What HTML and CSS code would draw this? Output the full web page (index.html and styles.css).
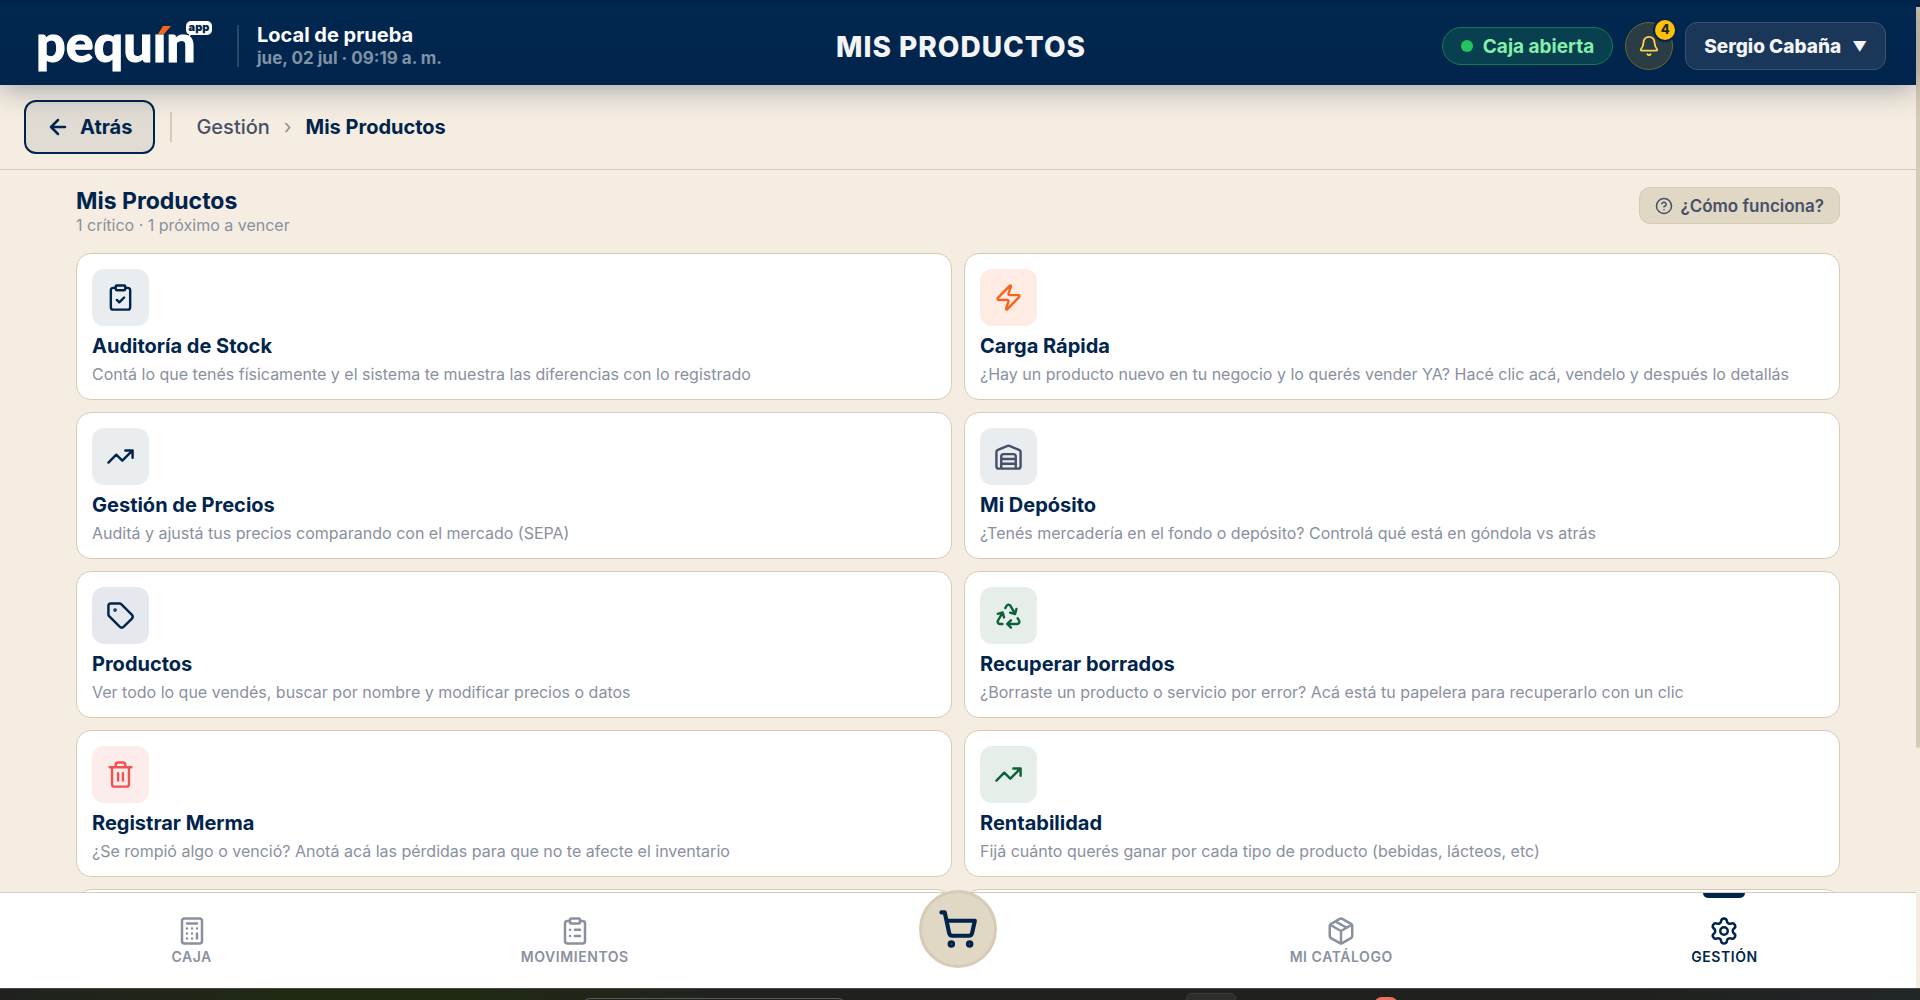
FILE: index.html
```html
<!DOCTYPE html>
<html lang="es">
<head>
<meta charset="utf-8">
<title>Mis Productos · pequín app</title>
<link rel="stylesheet" href="styles.css">
</head>
<body>
<svg class="sprite" aria-hidden="true">
  <symbol id="trend" viewBox="0 0 24 24"><path d="M22 7 13.5 15.5 8.500 10.500 2 17M16 7h6v6"/></symbol>
</svg>
<div class="app">
  <div class="screen">
    <header class="topbar">
      <div class="brand-side">
        <a class="logo" href="#" aria-label="pequín app">
          <span class="logo-word">pequın</span>
          <svg class="logo-accent" viewBox="0 0 13 8" aria-hidden="true"><path d="M0 8 5 0h8L6 8z"/></svg>
          <span class="logo-app">app</span>
        </a>
        <span class="top-divider"></span>
        <div class="store">
          <strong>Local de prueba</strong>
          <span>jue, 02 jul · 09:19 a. m.</span>
        </div>
      </div>
      <h1 class="top-title">MIS PRODUCTOS</h1>
      <div class="top-actions">
        <button class="cash" type="button"><span class="dot"></span>Caja abierta</button>
        <button class="bell" type="button" aria-label="Notificaciones">
          <svg viewBox="0 0 24 24"><path d="M10.268 21a2 2 0 0 0 3.464 0M3.262 15.326A1 1 0 0 0 4 17h16a1 1 0 0 0 .74-1.673C19.410 13.956 18 12.499 18 8A6 6 0 0 0 6 8c0 4.499-1.411 5.956-2.738 7.326"/></svg>
          <span class="count">4</span>
        </button>
        <button class="user" type="button">Sergio Cabaña<span class="caret">▼</span></button>
      </div>
    </header>

    <nav class="crumbs" aria-label="Ruta">
      <button class="back" type="button"><svg viewBox="0 0 24 24"><path d="m12 19-7-7 7-7M19 12H5"/></svg>Atrás</button>
      <span class="crumb-divider"></span>
      <div class="trail">
        <a href="#">Gestión</a>
        <span class="sep">›</span>
        <strong>Mis Productos</strong>
      </div>
    </nav>

    <main class="content">
      <div class="page-head">
        <div>
          <h2>Mis Productos</h2>
          <p>1 crítico · 1 próximo a vencer</p>
        </div>
        <button class="help" type="button"><svg viewBox="0 0 24 24"><circle cx="12" cy="12" r="10"/><path d="M9.090 9a3 3 0 0 1 5.830 1c0 2-3 3-3 3M12 17h.01"/></svg>¿Cómo funciona?</button>
      </div>

      <div class="grid">
        <a class="card" href="#">
          <span class="tile navy"><svg viewBox="0 0 24 24"><rect x="8" y="2" width="8" height="4" rx="1"/><path d="M16 4h2a2 2 0 0 1 2 2v14a2 2 0 0 1-2 2H6a2 2 0 0 1-2-2V6a2 2 0 0 1 2-2h2M9 14l2 2 4-4"/></svg></span>
          <h3>Auditoría de Stock</h3>
          <p>Contá lo que tenés físicamente y el sistema te muestra las diferencias con lo registrado</p>
        </a>
        <a class="card" href="#">
          <span class="tile orange"><svg viewBox="0 0 24 24"><path d="M4 14a1 1 0 0 1-.78-1.630l9.900-10.200a.5.5 0 0 1 .86.460l-1.920 6.020A1 1 0 0 0 13 10h7a1 1 0 0 1 .78 1.630l-9.900 10.200a.5.5 0 0 1-.86-.460l1.920-6.020A1 1 0 0 0 11 14z"/></svg></span>
          <h3>Carga Rápida</h3>
          <p>¿Hay un producto nuevo en tu negocio y lo querés vender YA? Hacé clic acá, vendelo y después lo detallás</p>
        </a>
        <a class="card" href="#">
          <span class="tile navy"><svg><use href="#trend"/></svg></span>
          <h3>Gestión de Precios</h3>
          <p>Auditá y ajustá tus precios comparando con el mercado (SEPA)</p>
        </a>
        <a class="card" href="#">
          <span class="tile slate"><svg viewBox="0 0 24 24"><path d="M22 8.350V20a2 2 0 0 1-2 2H4a2 2 0 0 1-2-2V8.350A2 2 0 0 1 3.260 6.500l8-3.200a2 2 0 0 1 1.480 0l8 3.200A2 2 0 0 1 22 8.350ZM6 18h12M6 14h12M6 22V12a2 2 0 0 1 2-2h8a2 2 0 0 1 2 2v10"/></svg></span>
          <h3>Mi Depósito</h3>
          <p>¿Tenés mercadería en el fondo o depósito? Controlá qué está en góndola vs atrás</p>
        </a>
        <a class="card" href="#">
          <span class="tile navy-deep"><svg viewBox="0 0 24 24"><path d="M12.586 2.586A2 2 0 0 0 11.172 2H4a2 2 0 0 0-2 2v7.172a2 2 0 0 0 .586 1.414l8.704 8.704a2.426 2.426 0 0 0 3.420 0l6.580-6.580a2.426 2.426 0 0 0 0-3.420z"/><circle cx="7.500" cy="7.500" r=".5" fill="currentColor"/></svg></span>
          <h3>Productos</h3>
          <p>Ver todo lo que vendés, buscar por nombre y modificar precios o datos</p>
        </a>
        <a class="card" href="#">
          <span class="tile green"><svg viewBox="0 0 24 24"><path d="M7 19H4.815a1.830 1.830 0 0 1-1.570-.881 1.785 1.785 0 0 1-.004-1.784L7.196 9.500M11 19h8.203a1.830 1.830 0 0 0 1.556-.890 1.784 1.784 0 0 0 0-1.775l-1.226-2.120M14 16l-3 3 3 3M8.293 13.596 7.196 9.500 3.100 10.598M9.344 5.811l1.093-1.892A1.830 1.830 0 0 1 11.985 3a1.784 1.784 0 0 1 1.546.888l3.943 6.843M13.378 9.633l4.096 1.098 1.097-4.096"/></svg></span>
          <h3>Recuperar borrados</h3>
          <p>¿Borraste un producto o servicio por error? Acá está tu papelera para recuperarlo con un clic</p>
        </a>
        <a class="card" href="#">
          <span class="tile red"><svg viewBox="0 0 24 24"><path d="M3 6h18M19 6v14a2 2 0 0 1-2 2H7a2 2 0 0 1-2-2V6M8 6V4a2 2 0 0 1 2-2h4a2 2 0 0 1 2 2v2M10 11v6M14 11v6"/></svg></span>
          <h3>Registrar Merma</h3>
          <p>¿Se rompió algo o venció? Anotá acá las pérdidas para que no te afecte el inventario</p>
        </a>
        <a class="card" href="#">
          <span class="tile green"><svg><use href="#trend"/></svg></span>
          <h3>Rentabilidad</h3>
          <p>Fijá cuánto querés ganar por cada tipo de producto (bebidas, lácteos, etc)</p>
        </a>
        <a class="card" href="#" aria-label="Más opciones"></a>
        <a class="card" href="#" aria-label="Más opciones"></a>
      </div>
    </main>

    <nav class="tabs" aria-label="Principal">
      <a href="#"><svg viewBox="0 0 24 24"><rect x="4" y="2" width="16" height="20" rx="2"/><path d="M8 6h8M16 14v4M16 10h.01M12 10h.01M8 10h.01M12 14h.01M8 14h.01M12 18h.01M8 18h.01"/></svg>CAJA</a>
      <a href="#"><svg viewBox="0 0 24 24"><rect x="8" y="2" width="8" height="4" rx="1"/><path d="M16 4h2a2 2 0 0 1 2 2v14a2 2 0 0 1-2 2H6a2 2 0 0 1-2-2V6a2 2 0 0 1 2-2h2M12 11h4M12 16h4M8 11h.01M8 16h.01"/></svg>MOVIMIENTOS</a>
      <div class="tab-center">
        <button class="cart" type="button" aria-label="Vender"><svg viewBox="0 0 24 24"><circle cx="8" cy="21" r="1"/><circle cx="19" cy="21" r="1"/><path d="M2.050 2.050h2l2.660 12.420a2 2 0 0 0 2 1.580h9.780a2 2 0 0 0 1.950-1.570l1.650-7.430H5.120"/></svg></button>
      </div>
      <a href="#"><svg viewBox="0 0 24 24"><path d="M11 21.730a2 2 0 0 0 2 0l7-4A2 2 0 0 0 21 16V8a2 2 0 0 0-1-1.730l-7-4a2 2 0 0 0-2 0l-7 4A2 2 0 0 0 3 8v8a2 2 0 0 0 1 1.730zM12 22V12M3.290 7 12 12l8.710-5M7.500 4.270l9 5.150"/></svg>MI CATÁLOGO</a>
      <a class="active" href="#" aria-current="page"><svg viewBox="0 0 24 24"><path d="M9.671 4.136a2.340 2.340 0 0 1 4.659 0 2.340 2.340 0 0 0 3.319 1.915 2.340 2.340 0 0 1 2.330 4.033 2.340 2.340 0 0 0 0 3.831 2.340 2.340 0 0 1-2.330 4.033 2.340 2.340 0 0 0-3.319 1.915 2.340 2.340 0 0 1-4.659 0 2.340 2.340 0 0 0-3.320-1.915 2.340 2.340 0 0 1-2.330-4.033 2.340 2.340 0 0 0 0-3.831A2.340 2.340 0 0 1 6.350 6.051a2.340 2.340 0 0 0 3.319-1.915"/><circle cx="12" cy="12" r="3"/></svg>GESTIÓN</a>
    </nav>
    <span class="scroll-thumb"></span>
  </div>
  <div class="dock"><span class="dock-search"></span><span class="dock-item"></span><span class="dock-badge"></span></div>
</div>
</body>
</html>
```

FILE: styles.css
```css
:root {
  --navy: #00244c;
  --cream: #f5ede1;
  --line: #d6cbb5;
  --sand: #e0d7c4;
  --muted: #8a909e;
  --slate: #475068;
}
* { box-sizing: border-box; }
body {
  margin: 0;
  font-family: Inter, "Liberation Sans", sans-serif;
  color: var(--navy);
  background: var(--cream);
}
h1, h2, h3, p { margin: 0; }
a { color: inherit; text-decoration: none; }
button { font: inherit; cursor: pointer; }
svg {
  display: block;
  fill: none;
  stroke: currentColor;
  stroke-width: 2;
  stroke-linecap: round;
  stroke-linejoin: round;
}
.sprite { position: absolute; width: 0; height: 0; }

.app { display: flex; flex-direction: column; height: 100vh; }
.screen {
  position: relative;
  flex: 1;
  min-height: 0;
  display: flex;
  flex-direction: column;
  padding-right: 4px;
}

/* Top bar */
.topbar {
  z-index: 2;
  display: grid;
  grid-template-columns: 1fr auto 1fr;
  align-items: center;
  height: 85px;
  flex-shrink: 0;
  padding: 7px 30px 0 36px;
  color: #fff;
  background: linear-gradient(#03284f, var(--navy));
  box-shadow: 0 4px 30px rgba(0, 20, 50, .35), inset 0 7px var(--navy), 4px -78px var(--navy);
}
.brand-side { display: flex; align-items: center; }
.logo { position: relative; display: block; width: 176px; height: 52px; }
.logo-word {
  display: block;
  font: 900 52px/44px Lato, sans-serif;
  -webkit-text-stroke: 1px #fff;
}
.logo-accent {
  position: absolute;
  left: 122px;
  top: 6px;
  width: 13px;
  height: 8px;
  fill: #f7631b;
  stroke: none;
}
.logo-app {
  position: absolute;
  left: 150px;
  top: 1px;
  width: 26px;
  height: 14px;
  border-radius: 5px;
  background: #fff;
  color: var(--navy);
  font-size: 11px;
  font-weight: 900;
  line-height: 12px;
  text-align: center;
}
.logo-app::after {
  content: "";
  position: absolute;
  left: 3px;
  bottom: -2px;
  border: 2px solid transparent;
  border-left-color: #fff;
}
.top-divider { width: 2px; height: 42px; margin: 0 18px 0 25px; background: #294766; }
.store { display: flex; flex-direction: column; margin-top: 2px; font-size: 20px; line-height: 23px; }
.store strong { font-weight: 700; }
.store span { font-size: 17px; font-weight: 700; color: #8092a5; }
.top-title { margin-top: 2px; font-size: 28px; line-height: 32px; font-weight: 800; letter-spacing: 1px; color: #f3f4f6; }
.top-actions { display: flex; align-items: center; justify-content: flex-end; gap: 12px; }
.cash {
  display: flex;
  align-items: center;
  gap: 10px;
  height: 38px;
  padding: 0 18px;
  border: 1px solid #137a53;
  border-radius: 19px;
  background: #08404f;
  color: #86efac;
  font-size: 19px;
  font-weight: 700;
}
.dot { width: 12px; height: 12px; border-radius: 50%; background: #22c55e; }
.bell {
  position: relative;
  display: grid;
  place-items: center;
  width: 48px;
  height: 48px;
  padding: 0;
  border: 1px solid #6f6535;
  border-radius: 50%;
  background: #2a3d45;
  color: #fcd34d;
}
.bell svg { width: 22px; height: 22px; }
.count {
  position: absolute;
  right: -3px;
  top: -3px;
  width: 20px;
  height: 20px;
  border-radius: 50%;
  background: #ffc107;
  box-shadow: 0 0 0 2px var(--navy);
  color: #1f2937;
  font-size: 13px;
  line-height: 18px;
  font-weight: 800;
}
.user {
  display: flex;
  align-items: center;
  gap: 11px;
  height: 48px;
  padding: 0 18px;
  border: 1px solid #3a5374;
  border-radius: 12px;
  background: #1a375a;
  color: #f3f4f6;
  font-size: 19px;
  font-weight: 800;
}
.caret { font-size: 14px; }

/* Breadcrumb row */
.crumbs {
  display: flex;
  align-items: center;
  flex-shrink: 0;
  height: 85px;
  padding: 0 24px;
  border-bottom: 1px solid var(--line);
}
.back {
  display: flex;
  align-items: center;
  gap: 10px;
  height: 54px;
  padding: 0 21px 0 20px;
  border: 2px solid var(--navy);
  border-radius: 12px;
  background: #e0dcd4;
  color: var(--navy);
  font-size: 20px;
  font-weight: 700;
}
.back svg { width: 24px; height: 24px; stroke-width: 2.5; }
.crumb-divider { width: 2px; height: 30px; margin: 0 24px 0 15px; background: var(--line); }
.trail { display: flex; gap: 14px; font-size: 20px; line-height: 24px; }
.trail strong { font-weight: 700; }
.trail a { font-weight: 500; color: var(--slate); }
.sep { color: var(--muted); }

/* Page content */
.content { flex: 1; min-height: 0; overflow: hidden; padding: 17px 76px 0; }
.page-head { display: flex; justify-content: space-between; align-items: flex-start; height: 66px; }
.page-head h2 { font-size: 23px; line-height: 28px; font-weight: 700; }
.page-head p { font-size: 16px; line-height: 20px; color: var(--muted); }
.help {
  display: flex;
  align-items: center;
  gap: 7px;
  height: 37px;
  padding: 0 15px;
  border: 1px solid var(--line);
  border-radius: 11px;
  background: var(--sand);
  color: var(--slate);
  font-size: 17px;
  font-weight: 600;
}
.help svg { width: 18px; height: 18px; }
.grid { display: grid; grid-template-columns: 1fr 1fr; gap: 12px; }
.card {
  min-width: 0;
  min-height: 147px;
  padding: 15px 15px 14px;
  border: 1px solid var(--line);
  border-radius: 15px;
  background: #fff;
}
.card h3 { margin-top: 9px; font-size: 20px; line-height: 23px; font-weight: 700; }
.card p { margin-top: 5px; font-size: 16px; line-height: 22px; color: var(--muted); white-space: nowrap; }
.tile { display: grid; place-items: center; width: 57px; height: 57px; border-radius: 12px; }
.tile svg { width: 29px; height: 29px; }
.navy { background: #e9edf0; }
.navy-deep { background: #e5e9ee; }
.slate { background: #e9edf0; color: var(--slate); }
.orange { background: #feebe4; color: #f7631b; }
.green { background: #e6eee9; color: #0b6238; }
.red { background: #fdecec; color: #ef5350; }

/* Bottom tabs */
.tabs {
  display: grid;
  grid-template-columns: repeat(5, 1fr);
  height: 96px;
  flex-shrink: 0;
  border-top: 1px solid var(--line);
  background: #fff;
  color: var(--muted);
  font-size: 14px;
  line-height: 18px;
  font-weight: 600;
  letter-spacing: .04em;
}
.tabs a {
  position: relative;
  display: flex;
  flex-direction: column;
  align-items: center;
  justify-content: center;
  gap: 2px;
}
.tabs a svg { width: 30px; height: 30px; }
.tabs .active { color: var(--navy); }
.tabs .active::before {
  content: "";
  position: absolute;
  top: 0;
  width: 42px;
  height: 5px;
  border-radius: 0 0 5px 5px;
  background: var(--navy);
}
.tab-center { display: flex; justify-content: center; }
.cart {
  display: grid;
  place-items: center;
  width: 78px;
  height: 78px;
  margin-top: -3px;
  padding: 0;
  z-index: 1;
  border: 3px solid var(--line);
  border-radius: 50%;
  background: var(--sand);
  color: var(--navy);
}
.cart svg { width: 40px; height: 40px; stroke-width: 2.5; }
.scroll-thumb {
  position: absolute;
  right: 0;
  top: 7px;
  width: 4px;
  height: 75%;
  background: var(--line);
  border-radius: 0 0 2px 2px;
}

/* Desktop strip below the window */
.dock {
  position: relative;
  height: 12px;
  overflow: hidden;
  border-top: 1px solid #454745;
  background: linear-gradient(90deg, #20211e, #202914 15%, #202914 25%, #20211e 38%, #20211e 85%, #212628);
}
.dock span { position: absolute; }
.dock-search { left: 582px; top: 9px; width: 264px; height: 30px; border: 1px solid #5a5a58; border-radius: 8px; }
.dock-item { left: 1186px; top: 4px; width: 50px; height: 40px; border: 1px solid #3a3a39; border-radius: 5px; background: #2d2d2c; }
.dock-badge { left: 1374px; top: 8px; width: 24px; height: 24px; border-radius: 8px; background: #f0705c; }
```
